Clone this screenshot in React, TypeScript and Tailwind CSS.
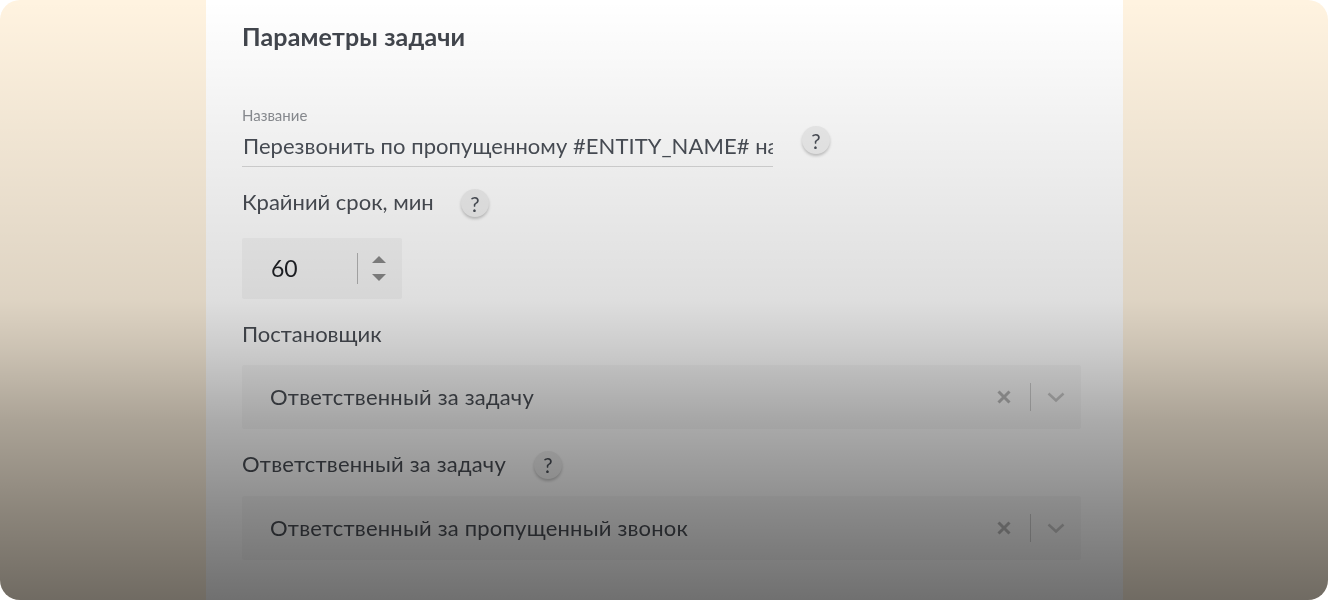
import React from "react";

function Help({ className = "" }: { className?: string }) {
  return (
    <div className={"flex h-[28px] w-[28px] shrink-0 items-center justify-center rounded-full bg-[#efefef] text-[21px] leading-none text-[#4a4f57] shadow-[0_2px_3px_rgba(0,0,0,0.22)] " + className}>
      ?
    </div>
  );
}

function Select({ value, className = "" }: { value: string; className?: string }) {
  return (
    <div className={"flex h-[64px] items-center rounded-[2px] bg-[#f8f8f8] pl-[28px] pr-[16px] text-[22px] tracking-[0.2px] text-[#4a4e55] " + className}>
      <span className="flex-1 pb-[2px]">{value}</span>
      <svg width="14" height="14" viewBox="0 0 14 14" className="mr-[19px]">
        <path d="M1.5 1.5 12.5 12.5M12.5 1.5 1.5 12.5" stroke="#b8b8b8" strokeWidth="3" fill="none" />
      </svg>
      <div className="h-[28px] w-px bg-[#cdcdcd]" />
      <svg width="18" height="11" viewBox="0 0 18 11" className="ml-[16px]">
        <path d="M1.5 1.5 9 8.5 16.5 1.5" stroke="#c8c8c8" strokeWidth="2.6" fill="none" />
      </svg>
    </div>
  );
}

export default function App() {
  return (
    <div className="relative h-[600px] w-[1328px] overflow-hidden rounded-[20px] bg-[#fff3e0] font-['Lato','Open_Sans',sans-serif]">
      <div className="ml-[206px] h-full w-[917px] bg-white pl-[36px] pr-[42px] pt-[22px] blur-[0.35px]">
        <h1 className="text-[25px] font-bold leading-[28px] tracking-[0.15px] text-[#42464d]">Параметры задачи</h1>

        <div className="mt-[56px] flex items-center">
          <div className="w-[531px]">
            <div className="text-[15px] leading-[18px] text-[#8c8f94]">Название</div>
            <div className="mt-[8px] overflow-hidden whitespace-nowrap border-b border-[#d9d9d9] pb-[7px] pl-[1px] text-[22px] leading-[27px] tracking-[0.05px] text-[#4a4f57]">
              Перезвонить по пропущенному #ENTITY_NAME# на
            </div>
          </div>
          <Help className="ml-[29px] mt-[7px]" />
        </div>

        <div className="mt-[13px] flex h-[46px] items-center text-[22px] text-[#4a4e55]">
          <span className="w-[219px] pb-[4px]">Крайний срок, мин</span>
          <Help />
        </div>

        <div className="mt-[12px] flex h-[61px] w-[160px] items-center rounded-[2px] bg-[#f6f6f6] pl-[29px] text-[23px] text-[#1f2126]">
          <span className="w-[86px]">60</span>
          <div className="h-[31px] w-px bg-[#b5b5b5]" />
          <div className="ml-[14px] flex flex-col gap-[11px]">
            <svg width="14" height="7" viewBox="0 0 14 7"><path d="M7 0 14 7H0Z" fill="#8a8a8a" /></svg>
            <svg width="14" height="7" viewBox="0 0 14 7"><path d="M0 0H14L7 7Z" fill="#8a8a8a" /></svg>
          </div>
        </div>

        <div className="mt-[20px] text-[22px] leading-[30px] text-[#4a4e55]">Постановщик</div>
        <Select value="Ответственный за задачу" className="mt-[16px]" />

        <div className="mt-[20px] flex h-[31px] items-center text-[22px] tracking-[0.2px] text-[#4a4e55]">
          <span className="w-[292px] pb-[2px]">Ответственный за задачу</span>
          <Help />
        </div>
        <Select value="Ответственный за пропущенный звонок" className="mt-[16px]" />
      </div>
      <div className="pointer-events-none absolute inset-0 bg-[linear-gradient(to_bottom,rgba(0,0,0,0)_0%,rgba(0,0,0,0.13)_50%,rgba(0,0,0,0.2)_58%,rgba(0,0,0,0.33)_70%,rgba(0,0,0,0.45)_85%,rgba(0,0,0,0.56)_100%)]" />
    </div>
  );
}
